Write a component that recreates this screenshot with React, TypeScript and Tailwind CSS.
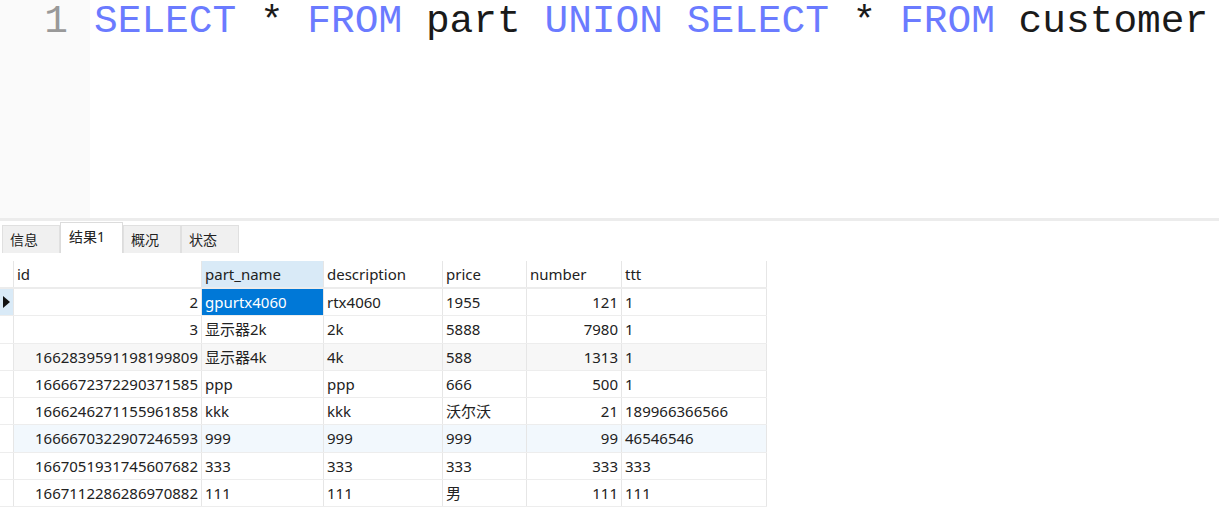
import React from 'react';

const cols = [
  { key: 'id', label: 'id', w: 188, right: true },
  { key: 'part_name', label: 'part_name', w: 122 },
  { key: 'description', label: 'description', w: 119 },
  { key: 'price', label: 'price', w: 84 },
  { key: 'number', label: 'number', w: 95, right: true },
  { key: 'ttt', label: 'ttt', w: 145 },
];

const rows = [
  ['2', 'gpurtx4060', 'rtx4060', '1955', '121', '1'],
  ['3', '显示器2k', '2k', '5888', '7980', '1'],
  ['1662839591198199809', '显示器4k', '4k', '588', '1313', '1'],
  ['1666672372290371585', 'ppp', 'ppp', '666', '500', '1'],
  ['1666246271155961858', 'kkk', 'kkk', '沃尔沃', '21', '189966366566'],
  ['1666670322907246593', '999', '999', '999', '99', '46546546'],
  ['1667051931745607682', '333', '333', '333', '333', '333'],
  ['1667112286286970882', '111', '111', '男', '111', '111'],
];

const tabs = ['信息', '结果1', '概况', '状态'];

export default function App() {
  return (
    <div className="w-[1219px] h-[518px] bg-white overflow-hidden flex flex-col" style={{ fontFamily: '"Noto Sans", "Noto Sans CJK SC", sans-serif' }}>
      {/* editor */}
      <div className="h-[218px] flex shrink-0">
        <div className="w-[90px] bg-[#fafafa] flex justify-end pr-[22px] pt-[1px]">
          <span className="text-[39.5px] leading-[42px] text-[#999]" style={{ fontFamily: '"Liberation Mono", monospace' }}>1</span>
        </div>
        <div className="pl-[4px] pt-[1px] text-[39.5px] leading-[42px] whitespace-pre text-[#1a1a1a]" style={{ fontFamily: '"Liberation Mono", monospace' }}>
          <span className="text-[#6b7bff]">SELECT</span> * <span className="text-[#6b7bff]">FROM</span> part <span className="text-[#6b7bff]">UNION</span> <span className="text-[#6b7bff]">SELECT</span> * <span className="text-[#6b7bff]">FROM</span> customer
        </div>
      </div>
      <div className="h-[3px] bg-[#ececec] shrink-0" />

      {/* tabs */}
      <div className="h-[32px] flex items-end px-[2px] shrink-0">
        {tabs.map((t, i) => (
          <div
            key={t}
            className={
              i === 1
                ? 'w-[63px] h-[31px] bg-white border border-b-0 border-[#dcdcdc] text-[14px] text-[#222] pl-[8px] pt-[3px]'
                : 'w-[58px] h-[28px] bg-[#f0f0f0] border border-b-0 border-[#e0e0e0] text-[14px] text-[#222] pl-[7px] pt-[3px]'
            }
          >
            {t}
          </div>
        ))}
      </div>
      <div className="h-[8px] shrink-0" />

      {/* grid */}
      <div className="flex flex-col w-fit text-[15px] text-[#222]">
        <div className="flex h-[28px] border-b-2 border-[#ececec]">
          <div className="w-[14px] border-r border-[#e6e6e6]" />
          {cols.map((c, i) => (
            <div
              key={c.key}
              className={`border-r border-[#e6e6e6] pl-[3px] leading-[27px] ${i === 1 ? 'bg-[#d9eaf7]' : ''}`}
              style={{ width: c.w }}
            >
              {c.label}
            </div>
          ))}
        </div>
        {rows.map((r, ri) => (
          <div
            key={ri}
            className={`flex h-[27.3px] border-b border-[#ededed] ${ri === 2 ? 'bg-[#f7f7f7]' : ri === 5 ? 'bg-[#f2f8fd]' : 'bg-white'}`}
          >
            <div className={`w-[14px] border-r border-[#e6e6e6] flex items-center pl-[3px] ${ri === 0 ? 'bg-[#d9eaf7]' : 'bg-white'}`}>
              {ri === 0 && (
                <svg width="7" height="12" viewBox="0 0 7 12"><path d="M0 0 L7 6 L0 12 Z" fill="#111" /></svg>
              )}
            </div>
            {cols.map((c, ci) => {
              const sel = ri === 0 && ci === 1;
              return (
                <div
                  key={c.key}
                  className={`border-r border-[#e6e6e6] px-[3px] leading-[26px] whitespace-nowrap overflow-hidden ${c.right ? 'text-right' : ''} ${sel ? 'bg-[#0078d7] text-white' : ''}`}
                  style={{ width: c.w }}
                >
                  {r[ci]}
                </div>
              );
            })}
          </div>
        ))}
      </div>
    </div>
  );
}
